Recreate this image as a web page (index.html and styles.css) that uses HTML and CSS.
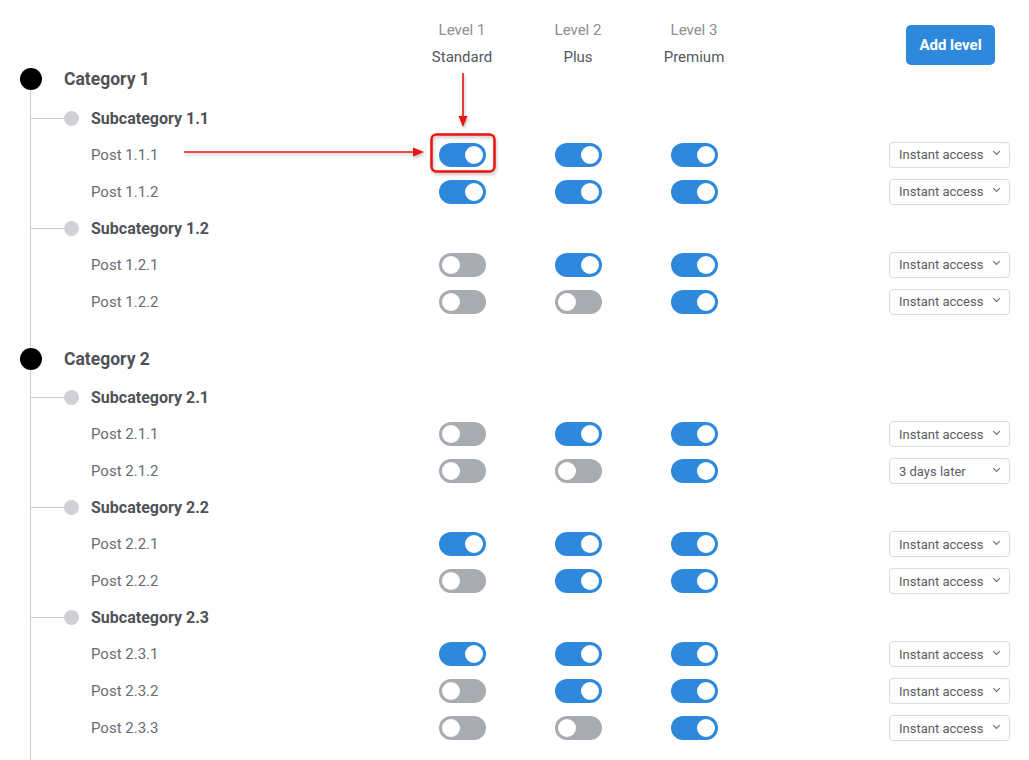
FILE: index.html
```html
<!DOCTYPE html>
<html lang="en">
<head>
  <meta charset="UTF-8" />
  <title>Content access levels</title>
  <link rel="stylesheet" href="styles.css">
</head>
<body>
  <div class="page">
    <div class="header row">
      <div></div>
      <div class="level"><span class="level-num">Level 1</span><span class="level-name">Standard</span></div>
      <div class="level"><span class="level-num">Level 2</span><span class="level-name">Plus</span></div>
      <div class="level"><span class="level-num">Level 3</span><span class="level-name">Premium</span></div>
      <div class="add-cell"><button class="add-btn">Add level</button></div>
    </div>

    <div class="tree" id="tree"></div>

    <!-- annotation -->
    <svg class="annotation" width="1029" height="760" viewBox="0 0 1029 760">
      <defs>
        <filter id="shadow" x="-20%" y="-20%" width="140%" height="140%">
          <feDropShadow dx="1" dy="2" stdDeviation="1.5" flood-color="#000" flood-opacity="0.25"/>
        </filter>
      </defs>
      <g filter="url(#shadow)" stroke="#e8150f" fill="none">
        <rect x="431.5" y="134.5" width="63" height="37" rx="5" stroke-width="2.5"/>
        <line x1="463" y1="73" x2="463" y2="118" stroke-width="1.6"/>
        <line x1="184" y1="152" x2="414" y2="152" stroke-width="1.6"/>
      </g>
      <g fill="#e8150f" filter="url(#shadow)">
        <polygon points="458.5,116 467.5,116 463,127"/>
        <polygon points="413,147.5 413,156.5 424,152"/>
      </g>
    </svg>
  </div>

  <script>
    const DATA = [
      { name: 'Category 1', subs: [
        { name: 'Subcategory 1.1', posts: [
          ['Post 1.1.1', [1, 1, 1], 'Instant access'],
          ['Post 1.1.2', [1, 1, 1], 'Instant access'],
        ]},
        { name: 'Subcategory 1.2', posts: [
          ['Post 1.2.1', [0, 1, 1], 'Instant access'],
          ['Post 1.2.2', [0, 0, 1], 'Instant access'],
        ]},
      ]},
      { name: 'Category 2', subs: [
        { name: 'Subcategory 2.1', posts: [
          ['Post 2.1.1', [0, 1, 1], 'Instant access'],
          ['Post 2.1.2', [0, 0, 1], '3 days later'],
        ]},
        { name: 'Subcategory 2.2', posts: [
          ['Post 2.2.1', [1, 1, 1], 'Instant access'],
          ['Post 2.2.2', [0, 1, 1], 'Instant access'],
        ]},
        { name: 'Subcategory 2.3', posts: [
          ['Post 2.3.1', [1, 1, 1], 'Instant access'],
          ['Post 2.3.2', [0, 1, 1], 'Instant access'],
          ['Post 2.3.3', [0, 0, 1], 'Instant access'],
        ]},
      ]},
    ];

    const chevron = '<svg width="9" height="6" viewBox="0 0 9 6"><path d="M1.2 1.2l3.3 3.3 3.3-3.3" fill="none" stroke="#6a6d72" stroke-width="1.1"/></svg>';

    function toggle(on) {
      return '<div class="cell"><span class="toggle' + (on ? ' on' : '') + '"><span class="knob"></span></span></div>';
    }

    let html = '';
    DATA.forEach(cat => {
      html += '<div class="category">';
      html += '<div class="row cat-row"><div class="cat-label"><span class="cat-dot"></span>' + cat.name + '</div></div>';
      cat.subs.forEach(sub => {
        html += '<div class="row sub-row"><div class="sub-label"><span class="connector"></span><span class="sub-dot"></span>' + sub.name + '</div></div>';
        sub.posts.forEach(p => {
          html += '<div class="row post-row"><div class="post-label">' + p[0] + '</div>';
          html += p[1].map(toggle).join('');
          html += '<div class="select-cell"><div class="select-box"><span>' + p[2] + '</span>' + chevron + '</div></div></div>';
        });
      });
      html += '</div>';
    });
    document.getElementById('tree').innerHTML = html;
  </script>
</body>
</html>
```

FILE: styles.css
```css
body {
  margin: 0;
  font-family: Roboto, "Liberation Sans", sans-serif;
  background: #fff;
  color: #555;
}
.page {
  position: relative;
  width: 1029px;
  height: 760px;
  overflow: hidden;
}
.row {
  display: grid;
  grid-template-columns: 404px 116px 116px 116px 1fr;
  align-items: center;
  padding-right: 19px;
}

/* header */
.header {
  height: 58px;
  align-items: start;
}
.level {
  display: flex;
  flex-direction: column;
  align-items: center;
  font-size: 15px;
  padding-top: 17px;
  line-height: 27px;
  height: 58px;
}
.level-num {
  color: #8b8e92;
}
.level-name {
  color: #55585c;
}
.add-cell {
  display: flex;
  justify-content: flex-end;
  padding-top: 25px;
  padding-right: 15px;
}
.add-btn {
  background: #2e89dc;
  color: #fff;
  border: none;
  border-radius: 5px;
  width: 89px;
  height: 40px;
  font-family: Roboto, sans-serif;
  font-weight: bold;
  font-size: 15px;
  cursor: pointer;
}

/* tree */
.tree {
  position: relative;
  padding-bottom: 30px;
}
.tree::before {
  content: "";
  position: absolute;
  left: 30px;
  top: 21px;
  bottom: 0;
  width: 1px;
  background: #cbced2;
}
.category + .category {
  margin-top: 17.5px;
}
.cat-row {
  height: 42px;
}
.cat-label {
  display: flex;
  align-items: center;
  padding-left: 20px;
  font-size: 17.5px;
  font-weight: bold;
  color: #4f5257;
}
.cat-dot {
  position: relative;
  width: 22px;
  height: 22px;
  border-radius: 50%;
  background: #000;
  margin-right: 22px;
}
.sub-row {
  height: 36px;
}
.sub-label {
  display: flex;
  align-items: center;
  padding-left: 31px;
  font-size: 16px;
  font-weight: bold;
  color: #4f5257;
}
.connector {
  width: 33px;
  height: 1px;
  background: #cbced2;
}
.sub-dot {
  width: 15px;
  height: 15px;
  border-radius: 50%;
  background: #cfd1d4;
  margin-right: 12px;
}
.post-row {
  height: 37px;
}
.post-label {
  padding-left: 91px;
  font-size: 15px;
  color: #686c74;
}

/* toggles */
.cell {
  display: flex;
  justify-content: center;
}
.toggle {
  position: relative;
  width: 47px;
  height: 24px;
  border-radius: 12px;
  background: #a8abb0;
}
.toggle.on {
  background: #2e89dc;
}
.knob {
  position: absolute;
  top: 3px;
  left: 3px;
  width: 18px;
  height: 18px;
  border-radius: 50%;
  background: #fff;
}
.toggle.on .knob {
  left: 26px;
}

/* select */
.select-cell {
  display: flex;
  justify-content: flex-end;
}
.select-box {
  display: flex;
  align-items: center;
  justify-content: space-between;
  box-sizing: border-box;
  width: 121px;
  height: 26px;
  padding: 0 8px 0 9px;
  border: 1px solid #dcdcdc;
  border-radius: 4px;
  font-size: 13px;
  color: #5a5d62;
}
.select-box svg {
  margin-top: -3px;
}

.annotation {
  position: absolute;
  left: 0;
  top: 0;
  pointer-events: none;
}
```
